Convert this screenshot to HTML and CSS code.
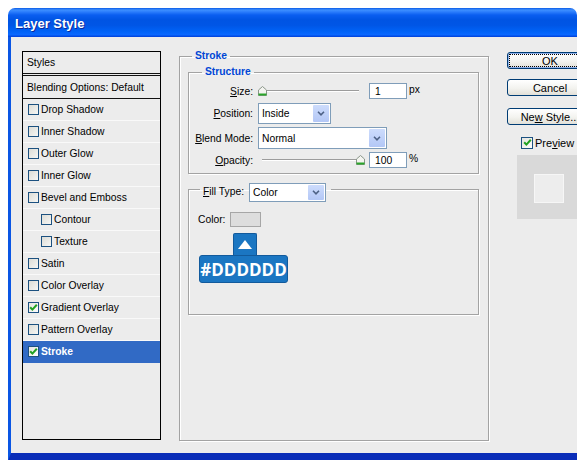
FILE: index.html
```html
<!DOCTYPE html>
<html>
<head>
  <title>Layer Style</title>
  <link rel="stylesheet" href="styles.css">
</head>
<body>
  <div class="window">
    <div class="titlebar">Layer Style</div>

    <div class="dialog">
      <div class="styles-list">
        <div class="list-head">Styles</div>
        <div class="list-blend">Blending Options: Default</div>
        <div class="style-row"><span class="check"></span>Drop Shadow</div>
        <div class="style-row"><span class="check"></span>Inner Shadow</div>
        <div class="style-row"><span class="check"></span>Outer Glow</div>
        <div class="style-row"><span class="check"></span>Inner Glow</div>
        <div class="style-row"><span class="check"></span>Bevel and Emboss</div>
        <div class="style-row sub"><span class="check"></span>Contour</div>
        <div class="style-row sub"><span class="check"></span>Texture</div>
        <div class="style-row"><span class="check"></span>Satin</div>
        <div class="style-row"><span class="check"></span>Color Overlay</div>
        <div class="style-row"><span class="check checked"><svg width="9" height="9" viewBox="0 0 9 9"><path d="M1.2 4.2 L3.4 6.6 L7.8 1.8" fill="none" stroke="#21a121" stroke-width="2"/></svg></span>Gradient Overlay</div>
        <div class="style-row"><span class="check"></span>Pattern Overlay</div>
        <div class="style-row active"><span class="check checked"><svg width="9" height="9" viewBox="0 0 9 9"><path d="M1.2 4.2 L3.4 6.6 L7.8 1.8" fill="none" stroke="#21a121" stroke-width="2"/></svg></span>Stroke</div>
      </div>

      <fieldset class="group stroke-group">
        <legend class="legend">Stroke</legend>

        <fieldset class="group structure">
          <legend class="legend legend-sub">Structure</legend>

          <div class="field-row row-size">
            <span class="field-label"><u>S</u>ize:</span>
            <div class="slider">
              <svg class="thumb" width="9" height="10" viewBox="0 0 9 10"><path d="M0.5 4 L4.5 0.5 L8.5 4 V9.5 H0.5 Z" fill="#f4f4f0" stroke="#8a968a"/><path d="M0.5 8.5 H8.5" stroke="#2aa52a" stroke-width="2"/></svg>
            </div>
            <div class="num">1</div>
            <span class="unit">px</span>
          </div>

          <div class="field-row row-position">
            <span class="field-label"><u>P</u>osition:</span>
            <div class="select select-position">
              <span>Inside</span>
              <span class="select-arrow"><svg width="8" height="5" viewBox="0 0 8 5"><path d="M1 0.8 L4 3.8 L7 0.8" fill="none" stroke="#4d6185" stroke-width="1.6"/></svg></span>
            </div>
          </div>

          <div class="field-row row-blend">
            <span class="field-label"><u>B</u>lend Mode:</span>
            <div class="select select-blend">
              <span>Normal</span>
              <span class="select-arrow"><svg width="8" height="5" viewBox="0 0 8 5"><path d="M1 0.8 L4 3.8 L7 0.8" fill="none" stroke="#4d6185" stroke-width="1.6"/></svg></span>
            </div>
          </div>

          <div class="field-row row-opacity">
            <span class="field-label"><u>O</u>pacity:</span>
            <div class="slider slider-max">
              <svg class="thumb" width="9" height="10" viewBox="0 0 9 10"><path d="M0.5 4 L4.5 0.5 L8.5 4 V9.5 H0.5 Z" fill="#f4f4f0" stroke="#8a968a"/><path d="M0.5 8.5 H8.5" stroke="#2aa52a" stroke-width="2"/></svg>
            </div>
            <div class="num">100</div>
            <span class="unit">%</span>
          </div>
        </fieldset>

        <fieldset class="group fill">
          <legend class="legend-fill">
            <span class="fill-label"><u>F</u>ill Type:</span>
            <div class="select select-fill">
              <span>Color</span>
              <span class="select-arrow"><svg width="8" height="5" viewBox="0 0 8 5"><path d="M1 0.8 L4 3.8 L7 0.8" fill="none" stroke="#4d6185" stroke-width="1.6"/></svg></span>
            </div>
          </legend>

          <div class="color-row">
            <span>Color:</span>
            <span class="swatch"></span>
          </div>

          <div class="callout">
            <div class="callout-tab"><svg width="14" height="9" viewBox="0 0 14 9"><path d="M7 0 L14 9 H0 Z" fill="#fff"/></svg></div>
            <div class="callout-label">#DDDDDD</div>
          </div>
        </fieldset>
      </fieldset>

      <div class="actions">
        <div class="btn btn-default"><span class="focus">OK</span></div>
        <div class="btn btn-cancel"><span>Cancel</span></div>
        <div class="btn btn-new"><span>Ne<u>w</u> Style...</span></div>
        <div class="preview-check">
          <span class="check checked"><svg width="9" height="9" viewBox="0 0 9 9"><path d="M1.2 4.2 L3.4 6.6 L7.8 1.8" fill="none" stroke="#21a121" stroke-width="2"/></svg></span>
          <span>Pre<u>v</u>iew</span>
        </div>
        <div class="preview-box">
          <div class="preview-swatch"></div>
        </div>
      </div>
    </div>
  </div>
</body>
</html>
```

FILE: styles.css
```css
body {
  margin: 0;
  background-color: #fff;
  overflow: hidden;
  font-family: 'Liberation Sans', Arial, sans-serif;
  font-size: 10.3px;
  color: #000;
}

.window {
  margin: 8px 0 0 8px;
  width: 569px;
  border-radius: 7px 7px 0 0;
  overflow: hidden;
}

.titlebar {
  height: 29px;
  box-sizing: border-box;
  padding: 8px 0 0 7px;
  color: #fff;
  font-weight: bold;
  font-size: 13px;
  text-shadow: 1px 1px 0 #0c2a9c;
  background: linear-gradient(#0a5ae6 0, #3d8fff 2px, #2a7cfc 4px, #0a5ef0 7px, #0054e3 12px, #0056e6 60%, #0062f6 80%, #0a68ff 92%, #003ed8 100%);
}

.dialog {
  display: flex;
  align-items: flex-start;
  height: 424px;
  box-sizing: border-box;
  padding: 14px 0 0 11px;
  background-color: #ececec;
  border-left: 3px solid #0a56e4;
  border-bottom: 8px solid #0a2db8;
}

/* Styles list on the left */
.styles-list {
  width: 139px;
  height: 389px;
  box-sizing: border-box;
  border: 1px solid #000;
  flex-shrink: 0;
}

.list-head {
  height: 21px;
  display: flex;
  align-items: center;
  padding-left: 4px;
  border-bottom: 1px solid #111;
}

.list-blend {
  height: 24px;
  box-sizing: border-box;
  display: flex;
  align-items: center;
  padding-left: 4px;
  margin-top: 1px;
  border-top: 1px solid #111;
  border-bottom: 1px solid #111;
}

.style-row {
  height: 22px;
  box-sizing: border-box;
  display: flex;
  align-items: center;
  gap: 2px;
  padding-left: 5px;
  border-bottom: 1px solid #f9f9f9;
}

.style-row.sub {
  padding-left: 18px;
}

.style-row.active {
  background-color: #316ac5;
  color: #fff;
  font-weight: bold;
  border-bottom-color: #316ac5;
}

.check {
  width: 11px;
  height: 11px;
  box-sizing: border-box;
  border: 1px solid #1c5180;
  background: linear-gradient(135deg, #dcdcd6, #f6f6f4);
  display: inline-flex;
  align-items: center;
  justify-content: center;
  flex-shrink: 0;
}

.check.checked {
  background: linear-gradient(135deg, #e4e4df, #fdfdfd);
}

/* Group boxes */
.group {
  margin: 0;
  min-width: 0;
  box-sizing: border-box;
  border: 1px solid #a3a3a3;
  box-shadow: 1px 1px 0 #fff, inset 1px 1px 0 #fff;
}

.legend {
  color: #0046d5;
  font-weight: bold;
  line-height: 12px;
  padding: 0 3px;
  margin-left: 4px;
}

.legend-sub {
  margin-left: 13px;
}

.stroke-group {
  width: 310px;
  height: 391px;
  margin: -1px 0 0 18px;
  padding: 4px 9px 0 8px;
  flex-shrink: 0;
}

.structure {
  width: 291px;
  padding: 0 0 5px 0;
}

.field-row {
  display: flex;
  align-items: center;
}

.row-size { height: 16px; margin-top: 5px; }
.row-position { height: 21px; margin-top: 4px; }
.row-blend { height: 22px; margin-top: 3px; }
.row-opacity { height: 16px; margin-top: 3px; }

.field-label {
  width: 64px;
  margin-right: 5px;
  text-align: right;
  flex-shrink: 0;
}

.slider {
  width: 107px;
  height: 12px;
  display: flex;
  align-items: center;
  background:
    linear-gradient(#9c9c9c, #9c9c9c) no-repeat 4px 5px / 97px 1px,
    linear-gradient(#fff, #fff) no-repeat 4px 6px / 97px 1px;
}

.slider-max {
  justify-content: flex-end;
}

.thumb {
  display: block;
}

.num {
  width: 38px;
  height: 16px;
  box-sizing: border-box;
  margin-left: 4px;
  padding-left: 5px;
  display: flex;
  align-items: center;
  border: 1px solid #7f9db9;
  background-color: #fff;
}

.unit {
  margin-left: 2px;
  margin-top: -4px;
}

.select {
  height: 100%;
  box-sizing: border-box;
  display: flex;
  align-items: center;
  justify-content: space-between;
  padding-left: 3px;
  border: 1px solid #7f9db9;
  background-color: #fff;
}

.select-position { width: 73px; }
.select-blend { width: 129px; }

.select-arrow {
  width: 16px;
  height: calc(100% - 2px);
  margin-right: 1px;
  border-radius: 1px;
  display: flex;
  align-items: center;
  justify-content: center;
  background: linear-gradient(#cddcfc, #b3c7f6);
}

/* Fill type */
.fill {
  margin-top: 9px;
  padding: 16px 0 31px 9px;
}

.legend-fill {
  display: flex;
  align-items: flex-start;
  padding: 0 5px 0 3px;
  margin-left: 2px;
  height: 13px;
}

.fill-label {
  margin-top: 3px;
  margin-right: 5px;
}

.select-fill {
  width: 77px;
  height: 19px;
  flex-shrink: 0;
}

.color-row {
  height: 15px;
  display: flex;
  align-items: center;
  gap: 5px;
}

.swatch {
  width: 31px;
  height: 15px;
  box-sizing: border-box;
  border: 1px solid #a6a6a6;
  background-color: #dddddd;
}

.callout {
  width: 89px;
  margin: 6px 0 0 1px;
  display: flex;
  flex-direction: column;
  align-items: center;
}

.callout-tab {
  width: 24px;
  height: 22px;
  box-sizing: border-box;
  margin-left: 3px;
  border: 1px solid #125a9c;
  border-bottom: none;
  border-radius: 2px 2px 0 0;
  background-color: #1b76c2;
  display: flex;
  align-items: center;
  justify-content: center;
}

.callout-label {
  width: 89px;
  height: 28px;
  box-sizing: border-box;
  border: 1px solid #125a9c;
  border-radius: 3px;
  background-color: #1b76c2;
  color: #fff;
  font-family: 'Open Sans', 'Liberation Sans', sans-serif;
  font-weight: bold;
  font-size: 17px;
  display: flex;
  align-items: center;
  justify-content: center;
}

/* Right column, cut off by the window edge */
.actions {
  margin: 1px 0 0 18px;
  width: 70px;
  flex-shrink: 0;
  overflow: hidden;
  font-size: 11px;
}

.btn {
  width: 86px;
  height: 17px;
  box-sizing: border-box;
  border: 1px solid #003c74;
  border-radius: 3px;
  background: linear-gradient(#fff, #f3f3ef 55%, #e2e0d8);
  display: flex;
  align-items: center;
  justify-content: center;
  white-space: nowrap;
}

.btn-default {
  box-shadow: inset 0 0 0 1px #8fb0e8;
}

.focus {
  width: 80px;
  height: 11px;
  border: 1px dotted #000;
  display: flex;
  align-items: center;
  justify-content: center;
}

.btn-cancel { margin-top: 10px; }
.btn-new { margin-top: 12px; }

.preview-check {
  margin: 11px 0 0 14px;
  height: 13px;
  display: flex;
  align-items: center;
  gap: 2px;
  white-space: nowrap;
}

.preview-check .check {
  width: 12px;
  height: 12px;
}

.preview-box {
  margin: 6px 0 0 10px;
  height: 64px;
  padding: 19px 0 0 17px;
  box-sizing: border-box;
  background-color: #d9d9d9;
}

.preview-swatch {
  width: 30px;
  height: 29px;
  box-sizing: border-box;
  border: 1px solid #f6f6f6;
  background-color: #ededed;
}
```
